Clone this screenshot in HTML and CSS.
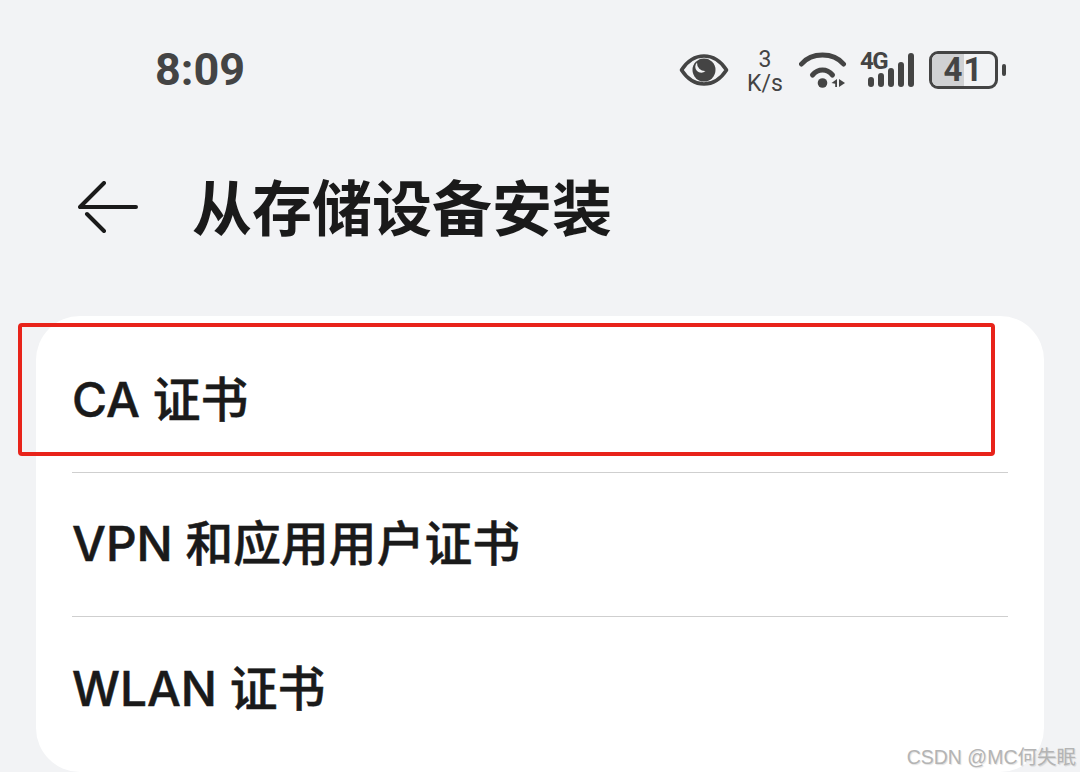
FILE: index.html
```html
<!DOCTYPE html>
<html lang="zh-CN">
<head>
<meta charset="utf-8">
<title>从存储设备安装</title>
<link rel="stylesheet" href="styles.css">
</head>
<body>
<div class="screen">
  <div class="status">
    <span class="time">8:09</span>
    <div class="icons">
      <svg class="eye" width="50" height="34" viewBox="0 0 50 34">
        <path d="M2.500 17C9 7 16 3 25 3s16 4 22.500 14C41 27 34 31 25 31S9 27 2.500 17z" fill="none" stroke="#444" stroke-width="3.600" stroke-linejoin="round"/>
        <circle cx="25" cy="17" r="11.500" fill="#444"/>
        <path d="M18 9.500a6 6 0 0 0 8.500 8.500 8 8 0 0 1-8.500-8.500z" fill="#f2f3f5"/>
      </svg>
      <div class="speed"><span>3</span><span>K/s</span></div>
      <svg class="wifi" width="48" height="38" viewBox="0 0 48 38">
        <path d="M2.500 13C8 6.500 15 4 23.500 4S39 6.500 44.500 13" fill="none" stroke="#444" stroke-width="5" stroke-linecap="round"/>
        <path d="M13.500 24c3-3.500 6-5 10-5s7 1.500 10 5" fill="none" stroke="#444" stroke-width="5" stroke-linecap="round"/>
        <circle cx="23.500" cy="32" r="4.800" fill="#444"/>
        <path d="M38 28v8h-1.800v-3.200L32.500 32zM40 28l6 4-6 4z" fill="#444"/>
      </svg>
      <div class="cell">
        <span class="net">4G</span>
        <div class="bars">
          <i class="bar b1"></i><i class="bar b2"></i><i class="bar b3"></i><i class="bar b4"></i><i class="bar b5"></i>
        </div>
      </div>
      <div class="battery">
        <div class="shell"><div class="level"></div><span class="pct">41</span></div>
        <i class="nub"></i>
      </div>
    </div>
  </div>

  <header class="head">
    <svg class="back" width="60" height="52" viewBox="0 0 60 52">
      <path d="M26 2 2 26h56M9 33l17 17" fill="none" stroke="#1a1a1a" stroke-width="4" stroke-linecap="round" stroke-linejoin="round"/>
    </svg>
    <h1 class="title">从存储设备安装</h1>
  </header>

  <main class="card">
    <div class="row">CA 证书</div>
    <div class="row">VPN 和应用用户证书</div>
    <div class="row last">WLAN 证书</div>
    <div class="mark"></div>
  </main>

  <div class="watermark">CSDN @MC何失眠</div>
</div>
</body>
</html>
```
FILE: styles.css
```css
* { box-sizing: border-box; }
html, body { margin: 0; padding: 0; }
body {
  background: #f2f3f5;
  font-family: "Noto Sans", "Noto Sans CJK SC", sans-serif;
}
.screen {
  position: relative;
  width: 1080px;
  height: 772px;
  overflow: hidden;
  display: flex;
  flex-direction: column;
}
.status {
  height: 140px;
  display: flex;
  align-items: flex-start;
  justify-content: space-between;
  padding: 0 74px 0 155px;
}
.time {
  margin-top: 44px;
  font: 700 45px/52px Roboto, sans-serif;
  color: #444;
}
.icons { display: flex; align-items: flex-start; height: 100px; }
.eye { margin: 53px 0 0 -2px; }
.speed {
  margin: 48px 0 0 17px;
  width: 38px;
  display: flex;
  flex-direction: column;
  align-items: center;
  font: 400 23px/24px Roboto, sans-serif;
  color: #444;
}
.wifi { margin: 51px 0 0 15px; }
.cell { position: relative; margin: 53px 0 0 13px; width: 54px; height: 34px; }
.net {
  position: absolute;
  left: 0;
  top: -2px;
  font: 700 24px/20px Roboto, sans-serif;
  letter-spacing: -1.500px;
  color: #444;
}
.bars { position: absolute; left: 8px; bottom: 0; display: flex; align-items: flex-end; gap: 4px; }
.bar { display: block; width: 6px; background: #444; border-radius: 3px; }
.b1 { height: 10px; }
.b2 { height: 14px; }
.b3 { height: 19px; }
.b4 { height: 25px; }
.b5 { height: 34px; }
.battery { display: flex; align-items: center; margin: 51px 0 0 15px; }
.shell {
  position: relative;
  width: 69px;
  height: 38px;
  border: 3px solid #444;
  border-radius: 9px;
  overflow: hidden;
  display: flex;
  align-items: center;
  justify-content: center;
}
.level { position: absolute; left: 0; top: 0; bottom: 0; width: 32px; background: #d0d1d3; }
.pct {
  position: relative;
  font: 700 33px/32px Roboto, sans-serif;
  letter-spacing: 1px;
  color: #444;
}
.nub { display: block; width: 4px; height: 12px; margin-left: 4px; background: #444; border-radius: 2px; }
.head { height: 136px; display: flex; align-items: center; padding: 0 0 0 78px; }
.back { flex: none; margin-top: -2px; }
.title {
  margin: -6px 0 0 54px;
  font-size: 60px;
  line-height: 80px;
  font-weight: 700;
  font-family: "Noto Sans CJK SC", sans-serif;
  color: #1a1a1a;
}
.card {
  position: relative;
  margin: 40px 36px 0;
  height: 456px;
  padding: 13px 36px 0;
  background: #fff;
  border-radius: 44px;
}
.row {
  height: 144px;
  display: flex;
  align-items: center;
  padding-bottom: 8px;
  border-bottom: 1px solid #cfcfcf;
  font-size: 47.800px;
  font-weight: 500;
  font-family: Inter, "Noto Sans CJK SC", sans-serif;
  -webkit-text-stroke: 0.5px #1a1a1a;
  color: #1a1a1a;
  white-space: pre;
}
.row.last { border-bottom: 0; }
.mark {
  position: absolute;
  left: -18px;
  top: 7px;
  width: 977px;
  height: 133px;
  border: 4px solid #e8231a;
  border-radius: 4px;
}
.watermark {
  position: absolute;
  right: 4px;
  bottom: 2px;
  font: 400 19.500px/26px "Liberation Sans", "Noto Sans CJK SC", sans-serif;
  color: #b4b4b4;
  text-shadow: 1px 1px 1px rgba(0, 0, 0, 0.12);
}
```
